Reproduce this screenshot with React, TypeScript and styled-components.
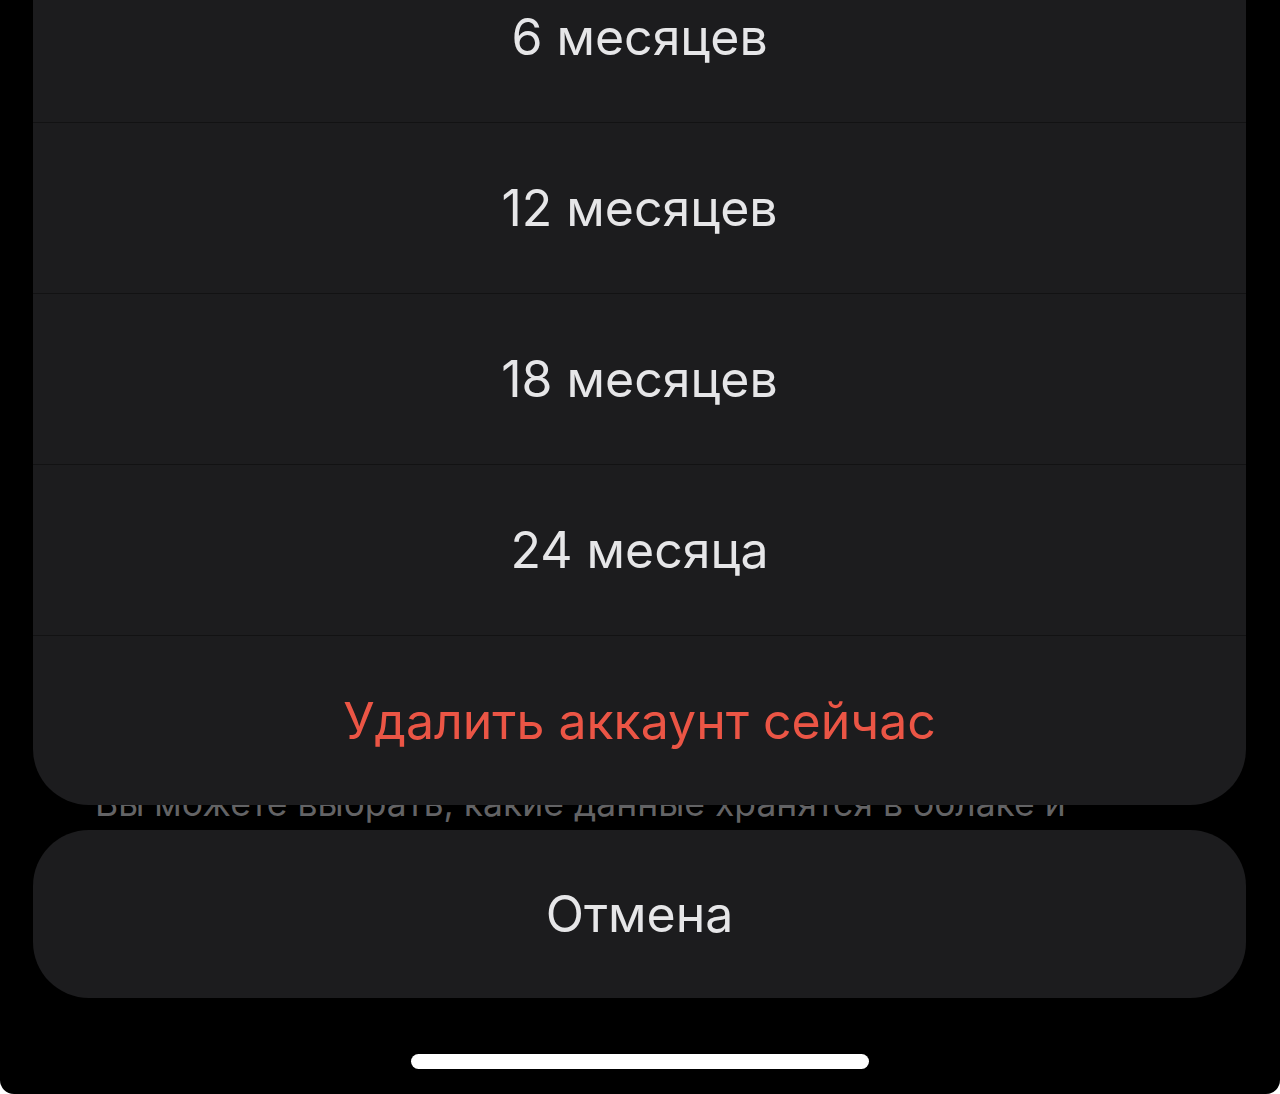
import React from "react";
import styled, { createGlobalStyle } from "styled-components";

const Global = createGlobalStyle`
  html, body { margin: 0; padding: 0; background: #ffffff; }
  body { font-family: "Inter", "Roboto", "Noto Sans", sans-serif; -webkit-font-smoothing: antialiased; }
  #root { width: 1280px; height: 1094px; }
`;

const Screen = styled.div`
  position: relative;
  width: 1280px;
  height: 1094px;
  background: #000;
  overflow: hidden;
  border-radius: 0 0 14px 14px;
`;

const BehindPage = styled.div`
  padding: 782px 0 0 95px;
`;

const BehindText = styled.p`
  margin: 0;
  font-family: "Inter", "Roboto", sans-serif;
  font-size: 35.5px;
  line-height: 44px;
  color: #636365;
  white-space: nowrap;
`;

const Overlay = styled.div`
  position: absolute;
  inset: 0;
  display: flex;
  flex-direction: column;
  justify-content: flex-end;
  padding: 0 34px 0 33px;
`;

const Group = styled.div`
  flex: none;
  display: flex;
  flex-direction: column;
  background: #1c1c1e;
  border-radius: 0 0 56px 56px;
  overflow: hidden;
`;

const Row = styled.div<{ $danger?: boolean }>`
  height: 170px;
  flex: none;
  display: flex;
  align-items: center;
  justify-content: center;
  font-size: 50px;
  letter-spacing: 0;
  color: ${(p) => (p.$danger ? "#eb5545" : "#e6e6e8")};
  & + & {
    border-top: 1px solid #121213;
  }
  &:last-child {
    height: 169px;
  }
`;

const Cancel = styled.div`
  flex: none;
  margin-top: 25px;
  height: 168px;
  display: flex;
  align-items: center;
  justify-content: center;
  background: #1c1c1e;
  border-radius: 56px;
  font-size: 50px;
  letter-spacing: 0;
  color: #e6e6e8;
`;

const HomeArea = styled.div`
  flex: none;
  height: 96px;
  display: flex;
  justify-content: center;
  padding-top: 56px;
  box-sizing: border-box;
`;

const HomeIndicator = styled.div`
  width: 458px;
  height: 15px;
  border-radius: 8px;
  background: #ffffff;
`;

const options = ["6 месяцев", "12 месяцев", "18 месяцев", "24 месяца"];

export default function App() {
  return (
    <>
      <Global />
      <Screen>
        <BehindPage>
          <BehindText>Вы можете выбрать, какие данные хранятся в облаке и</BehindText>
        </BehindPage>
        <Overlay>
          <Group>
            {options.map((o) => (
              <Row key={o}>{o}</Row>
            ))}
            <Row $danger>Удалить аккаунт сейчас</Row>
          </Group>
          <Cancel>Отмена</Cancel>
          <HomeArea>
            <HomeIndicator />
          </HomeArea>
        </Overlay>
      </Screen>
    </>
  );
}
